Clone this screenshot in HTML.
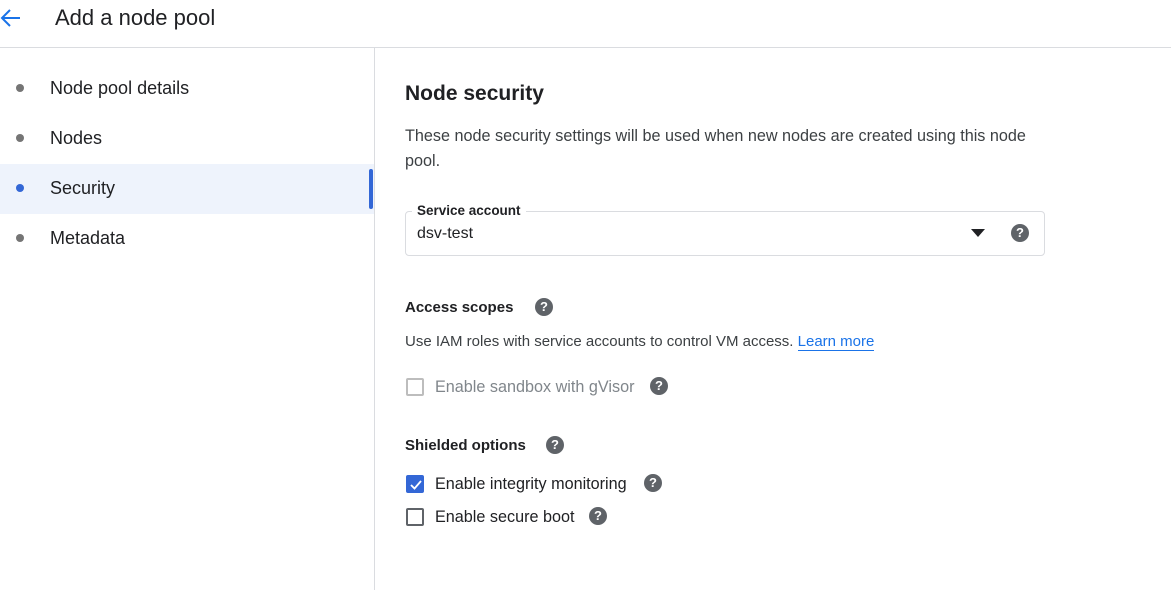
<!DOCTYPE html>
<html><head><style>
*{margin:0;padding:0;box-sizing:border-box}
body{width:1171px;height:590px;background:#fff;font-family:"Liberation Sans",sans-serif;color:#202124;position:relative;overflow:hidden}
.a{position:absolute;white-space:nowrap}
.help{position:absolute;width:18px;height:18px;border-radius:50%;background:#5f6368;color:#fff;font-size:13px;font-weight:bold;text-align:center;line-height:18px}
.dot{position:absolute;width:8px;height:8px;border-radius:50%;background:#757575;left:16px}
.nav{position:absolute;left:50px;font-size:18px;color:#202124}
.cb{position:absolute;width:18px;height:18px;border:2px solid #5f6368;border-radius:2px;left:406px}
</style></head><body>
<svg class="a" style="left:0;top:8px" width="22" height="20" viewBox="0 0 22 20"><path d="M20 10H3M10 2L2 10l8 8" fill="none" stroke="#1a73e8" stroke-width="2"/></svg>
<div class="a" style="left:55px;top:5px;font-size:22px;color:#202124">Add a node pool</div>
<div class="a" style="left:0;top:47px;width:1171px;height:1px;background:#dadce0"></div>
<div class="a" style="left:374px;top:48px;width:1px;height:542px;background:#dadce0"></div>
<div class="a" style="left:0;top:164px;width:374px;height:50px;background:#eef3fc"></div>
<div class="a" style="left:369px;top:169px;width:4px;height:40px;background:#3367d6;border-radius:2px"></div>
<div class="dot" style="top:84px"></div><div class="nav" style="top:78px">Node pool details</div>
<div class="dot" style="top:134px"></div><div class="nav" style="top:128px">Nodes</div>
<div class="dot" style="top:184px;background:#3367d6"></div><div class="nav" style="top:178px">Security</div>
<div class="dot" style="top:234px"></div><div class="nav" style="top:228px">Metadata</div>

<div class="a" style="left:405px;top:82px;font-size:21px;font-weight:bold;color:#202124">Node security</div>
<div class="a" style="left:405px;top:124px;font-size:16.2px;line-height:25px;color:#3c4043;white-space:normal;width:660px">These node security settings will be used when new nodes are created using this node<br>pool.</div>
<div class="a" style="left:405px;top:211px;width:640px;height:45px;border:1px solid #dadce0;border-radius:4px"></div>
<div class="a" style="left:412px;top:203px;background:#fff;padding:0 5px;font-size:13.5px;font-weight:bold;color:#202124">Service account</div>
<div class="a" style="left:417px;top:225px;font-size:16px;color:#202124">dsv-test</div>
<svg class="a" style="left:971px;top:229px" width="14" height="8"><path d="M0 0h14L7 8z" fill="#202124"/></svg>
<div class="help" style="left:1011px;top:224px">?</div>

<div class="a" style="left:405px;top:299px;font-size:15px;font-weight:bold;color:#202124">Access scopes</div>
<div class="help" style="left:535px;top:298px">?</div>
<div class="a" style="left:405px;top:333px;font-size:15px;color:#3c4043">Use IAM roles with service accounts to control VM access. <span style="color:#1a73e8;border-bottom:1px solid #1a73e8">Learn more</span></div>
<div class="cb" style="top:378px;border-color:#bdbdbd"></div>
<div class="a" style="left:435px;top:378px;font-size:16.2px;color:#80868b">Enable sandbox with gVisor</div>
<div class="help" style="left:650px;top:377px">?</div>

<div class="a" style="left:405px;top:437px;font-size:15px;font-weight:bold;color:#202124">Shielded options</div>
<div class="help" style="left:546px;top:436px">?</div>
<div class="cb" style="top:475px;background:#3367d6;border-color:#3367d6"><svg style="position:absolute;left:1px;top:1px" width="14" height="14"><path d="M2 7l3.5 3.5L12 3" fill="none" stroke="#fff" stroke-width="1.8"/></svg></div>
<div class="a" style="left:435px;top:475px;font-size:16.2px;color:#202124">Enable integrity monitoring</div>
<div class="help" style="left:644px;top:474px">?</div>
<div class="cb" style="top:508px"></div>
<div class="a" style="left:435px;top:508px;font-size:16.2px;color:#202124">Enable secure boot</div>
<div class="help" style="left:589px;top:507px">?</div>
</body></html>
